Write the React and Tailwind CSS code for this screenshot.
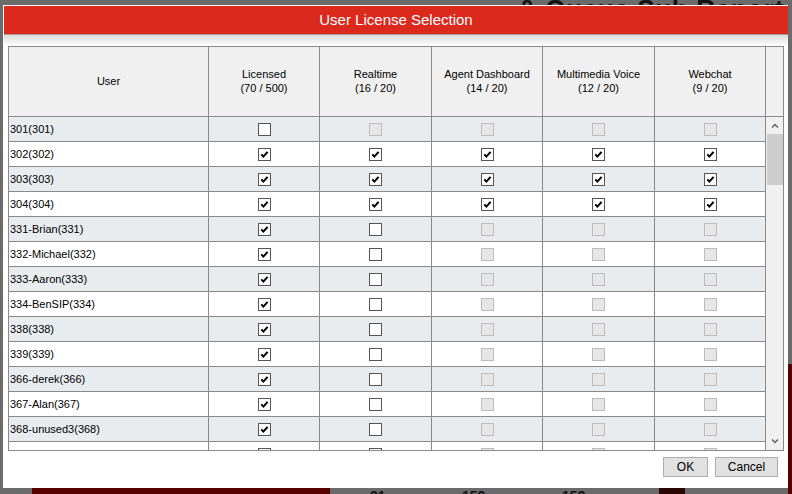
import React from 'react';

const cols = [
  { name: 'Licensed', count: '(70 / 500)', w: 'w-[111px]' },
  { name: 'Realtime', count: '(16 / 20)', w: 'w-[112px]' },
  { name: 'Agent Dashboard', count: '(14 / 20)', w: 'w-[111px]' },
  { name: 'Multimedia Voice', count: '(12 / 20)', w: 'w-[112px]' },
  { name: 'Webchat', count: '(9 / 20)', w: 'w-[111px]' },
];

const users = [
  '301(301)',
  '302(302)',
  '303(303)',
  '304(304)',
  '331-Brian(331)',
  '332-Michael(332)',
  '333-Aaron(333)',
  '334-BenSIP(334)',
  '338(338)',
  '339(339)',
  '366-derek(366)',
  '367-Alan(367)',
  '368-unused3(368)',
  '369-unused4(369)',
];

// on / off / dis for each column
const stateFor = (row, col) => {
  if (row === 0) return col === 0 ? 'off' : 'dis';
  if (row <= 3) return 'on';
  if (col === 0) return 'on';
  if (col === 1) return 'off';
  return 'dis';
};

const CheckBox = ({ state }) => {
  if (state === 'dis') {
    return <div className="w-[13px] h-[13px] border border-[#bcbcbc] bg-[#e6e6e6]" />;
  }
  return (
    <div className="w-[13px] h-[13px] border border-[#555] bg-white flex items-center justify-center">
      {state === 'on' && (
        <svg width="11" height="11" viewBox="0 0 11 11">
          <path d="M2.3 5.3 L4.4 7.6 L8.6 2.8" fill="none" stroke="#000" strokeWidth="2" />
        </svg>
      )}
    </div>
  );
};

const Button = ({ children, w }) => (
  <button className={`${w} h-[20px] border border-[#adadad] bg-[#e1e1e1] text-[12px] text-black leading-none`}>
    {children}
  </button>
);

export default function App() {
  return (
    <div
      className="relative w-[792px] h-[494px] overflow-hidden bg-[#6b6b6b]"
      style={{ fontFamily: '"Liberation Sans", Arial, sans-serif' }}
    >
      {/* page behind the overlay */}
      <div className="absolute left-[518px] top-[-6px] text-[26px] leading-[30px] font-bold text-[#111] whitespace-nowrap tracking-wide">
        & Queue Sub Report
      </div>
      <div className="absolute left-[32px] top-[488px] w-[298px] h-[6px] bg-[#560000]" />
      <div className="absolute left-[659px] top-[488px] w-[26px] h-[6px] bg-[#2a0606]" />
      <div className="absolute left-[370px] top-[489px] text-[14px] leading-[14px] font-bold text-[#111]">21</div>
      <div className="absolute left-[462px] top-[489px] text-[14px] leading-[14px] font-bold text-[#111]">152</div>
      <div className="absolute left-[562px] top-[489px] text-[14px] leading-[14px] font-bold text-[#111]">152</div>
      <div className="absolute left-[788px] top-[364px] w-[4px] h-[130px] bg-[#560000]" />

      {/* dialog */}
      <div className="absolute left-[3px] top-[5px] w-[785px] h-[483px] bg-white pt-px pl-px flex flex-col">
        <div className="h-[28px] bg-[#dc291e] flex items-center justify-center text-white text-[15px]">
          User License Selection
        </div>
        <div className="h-px bg-[#a0a0a0]" />
        <div className="h-[11px] bg-gradient-to-b from-[#dcdcdc] to-white" />

        <div className="ml-[4px] w-[776px] border border-[#8a8a8a] text-[11px] text-black">
          {/* header */}
          <div className="flex h-[70px] border-b border-[#8a8a8a] bg-[#f0f0f0]">
            <div className="w-[200px] border-r border-[#8a8a8a] flex items-center justify-center">User</div>
            {cols.map((c) => (
              <div
                key={c.name}
                className={`${c.w} border-r border-[#8a8a8a] flex flex-col items-center justify-center leading-[14px] pb-px`}
              >
                <span>{c.name}</span>
                <span>{c.count}</span>
              </div>
            ))}
            <div className="flex-1" />
          </div>

          {/* body */}
          <div className="flex h-[333px] overflow-hidden">
            <div className="w-[757px]">
              {users.map((u, r) => (
                <div
                  key={u}
                  className={`flex h-[25px] border-b border-[#8a8a8a] ${r % 2 === 0 ? 'bg-[#e8ecef]' : 'bg-white'}`}
                >
                  <div className="w-[200px] border-r border-[#8a8a8a] flex items-center pl-px">{u}</div>
                  {cols.map((c, ci) => (
                    <div key={c.name} className={`${c.w} border-r border-[#8a8a8a] flex items-center justify-center`}>
                      <CheckBox state={stateFor(r, ci)} />
                    </div>
                  ))}
                </div>
              ))}
            </div>
            <div className="flex-1 bg-[#f0f0f0] flex flex-col">
              <div className="h-[17px] flex items-center justify-center">
                <svg width="8" height="5" viewBox="0 0 8 5">
                  <path d="M1 4.5 L4 1.5 L7 4.5" fill="none" stroke="#606060" strokeWidth="1.5" />
                </svg>
              </div>
              <div className="ml-px h-[51px] bg-[#cdcdcd]" />
              <div className="flex-1" />
              <div className="h-[17px] flex items-center justify-center">
                <svg width="8" height="5" viewBox="0 0 8 5">
                  <path d="M1 0.5 L4 3.5 L7 0.5" fill="none" stroke="#606060" strokeWidth="1.5" />
                </svg>
              </div>
            </div>
          </div>
        </div>

        <div className="flex justify-end gap-[7px] mt-[6px] pr-[10px]">
          <Button w="w-[45px]">OK</Button>
          <Button w="w-[63px]">Cancel</Button>
        </div>
      </div>
    </div>
  );
}
